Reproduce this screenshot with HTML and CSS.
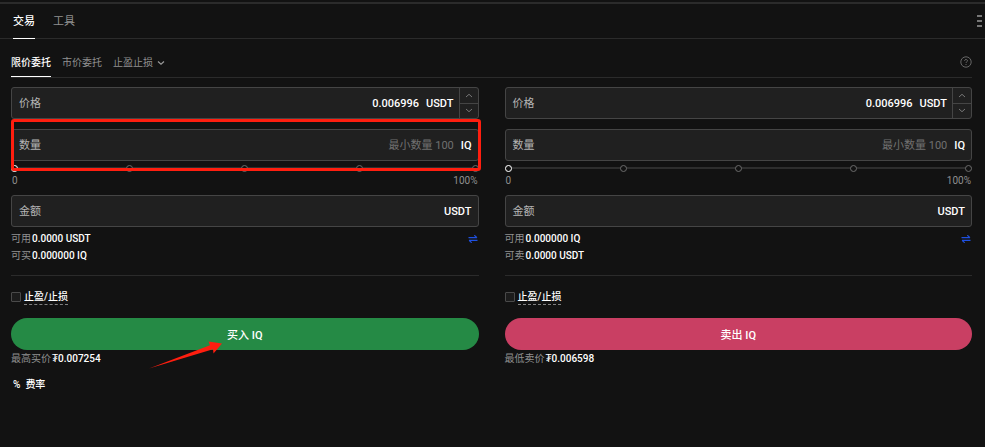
FILE: index.html
```html
<!DOCTYPE html>
<html lang="zh-CN">

<head>
    <meta charset="UTF-8">
    <meta name="viewport" content="width=device-width, initial-scale=1.0">
    <title>交易</title>
    <link rel="stylesheet" href="styles.css">
</head>

<body>
    <header class="top-bar">
        <nav class="main-tabs">
            <a href="#trade" class="main-tab active">交易</a>
            <a href="#tools" class="main-tab">工具</a>
        </nav>
        <button type="button" class="icon-btn menu-btn" aria-label="菜单">
            <svg width="6" height="14" viewBox="0 0 6 14" fill="#777">
                <rect x="0" y="1" width="5" height="2" />
                <rect x="0" y="6" width="5" height="2" />
                <rect x="0" y="11" width="5" height="2" />
            </svg>
        </button>
    </header>

    <main class="panel">
        <div class="order-bar">
            <nav class="order-tabs">
                <a href="#limit" class="order-tab active">限价委托</a>
                <a href="#market" class="order-tab">市价委托</a>
                <a href="#stop" class="order-tab">止盈止损
                    <svg width="8" height="6" viewBox="0 0 8 6" fill="none" stroke="#999" stroke-width="1.2">
                        <path d="M1 1.5L4 4.3L7 1.5" />
                    </svg>
                </a>
            </nav>
            <button type="button" class="icon-btn" aria-label="帮助">
                <svg width="12" height="12" viewBox="0 0 12 12" fill="none" stroke="#666">
                    <circle cx="6" cy="6" r="5.2" />
                    <path d="M4.5 4.9C4.5 3 7.5 3.1 7.5 4.8C7.5 5.8 6 5.8 6 7" />
                    <path d="M6 8V9" />
                </svg>
            </button>
        </div>

        <div class="forms">
            <form class="order-form buy">
                <div class="field">
                    <label for="buy-price">价格</label>
                    <input type="text" id="buy-price" value="0.006996">
                    <span class="unit">USDT</span>
                    <div class="stepper">
                        <button type="button" aria-label="增加">
                            <svg width="8" height="5" viewBox="0 0 8 5" fill="none" stroke="#777"><path d="M1 4L4 1.3L7 4" /></svg>
                        </button>
                        <button type="button" aria-label="减少">
                            <svg width="8" height="5" viewBox="0 0 8 5" fill="none" stroke="#777"><path d="M1 1L4 3.7L7 1" /></svg>
                        </button>
                    </div>
                </div>
                <div class="amount">
                    <div class="field">
                        <label for="buy-amount">数量</label>
                        <input type="text" id="buy-amount" placeholder="最小数量 100">
                        <span class="unit">IQ</span>
                    </div>
                    <div class="slider">
                        <div class="stops"><i></i><i></i><i></i><i></i><i></i></div>
                        <input type="range" min="0" max="100" value="0" aria-label="买入比例">
                    </div>
                    <div class="highlight"></div>
                </div>
                <div class="scale"><span>0</span><span>100%</span></div>
                <div class="field">
                    <label for="buy-total">金额</label>
                    <input type="text" id="buy-total">
                    <span class="unit">USDT</span>
                </div>
                <div class="balance">
                    <div>
                        <p>可用<b>0.0000 USDT</b></p>
                        <p>可买<b>0.000000 IQ</b></p>
                    </div>
                    <button type="button" class="icon-btn" aria-label="划转">
                        <svg width="10" height="8" viewBox="0 0 10 8" fill="none" stroke="#1f50e0" stroke-width="1.2">
                            <path d="M0.5 2.6H9M6.3 0.3L9 2.6M9.5 5.4H1M3.7 7.7L1 5.4" />
                        </svg>
                    </button>
                </div>
                <div class="tpsl">
                    <input type="checkbox" id="buy-tpsl">
                    <label for="buy-tpsl">止盈/止损</label>
                </div>
                <div class="submit-row">
                    <button type="button" class="submit">买入 IQ</button>
                    <svg class="arrow" width="74" height="30" viewBox="0 0 74 30" fill="#ff1e0f">
                        <path d="M0 27.5L61 4.2L59.5 0.5L73 2.5L64.5 12.5L64 8.2Z" />
                    </svg>
                </div>
                <p class="limit">最高买价<b>₮0.007254</b></p>
            </form>

            <form class="order-form sell">
                <div class="field">
                    <label for="sell-price">价格</label>
                    <input type="text" id="sell-price" value="0.006996">
                    <span class="unit">USDT</span>
                    <div class="stepper">
                        <button type="button" aria-label="增加">
                            <svg width="8" height="5" viewBox="0 0 8 5" fill="none" stroke="#777"><path d="M1 4L4 1.3L7 4" /></svg>
                        </button>
                        <button type="button" aria-label="减少">
                            <svg width="8" height="5" viewBox="0 0 8 5" fill="none" stroke="#777"><path d="M1 1L4 3.7L7 1" /></svg>
                        </button>
                    </div>
                </div>
                <div class="amount">
                    <div class="field">
                        <label for="sell-amount">数量</label>
                        <input type="text" id="sell-amount" placeholder="最小数量 100">
                        <span class="unit">IQ</span>
                    </div>
                    <div class="slider">
                        <div class="stops"><i></i><i></i><i></i><i></i><i></i></div>
                        <input type="range" min="0" max="100" value="0" aria-label="卖出比例">
                    </div>
                </div>
                <div class="scale"><span>0</span><span>100%</span></div>
                <div class="field">
                    <label for="sell-total">金额</label>
                    <input type="text" id="sell-total">
                    <span class="unit">USDT</span>
                </div>
                <div class="balance">
                    <div>
                        <p>可用<b>0.000000 IQ</b></p>
                        <p>可卖<b>0.0000 USDT</b></p>
                    </div>
                    <button type="button" class="icon-btn" aria-label="划转">
                        <svg width="10" height="8" viewBox="0 0 10 8" fill="none" stroke="#1f50e0" stroke-width="1.2">
                            <path d="M0.5 2.6H9M6.3 0.3L9 2.6M9.5 5.4H1M3.7 7.7L1 5.4" />
                        </svg>
                    </button>
                </div>
                <div class="tpsl">
                    <input type="checkbox" id="sell-tpsl">
                    <label for="sell-tpsl">止盈/止损</label>
                </div>
                <div class="submit-row">
                    <button type="button" class="submit">卖出 IQ</button>
                </div>
                <p class="limit">最低卖价<b>₮0.006598</b></p>
            </form>
        </div>

        <a href="#fees" class="fees"><span>%</span>费率</a>
    </main>
</body>

</html>
```

FILE: styles.css
```css
* {
    box-sizing: border-box;
}

body {
    margin: 0;
    min-height: 100vh;
    background: #121212;
    border-top: 2px solid #121212;
    color: #fff;
    font-family: Roboto, "Noto Sans CJK SC", sans-serif;
    font-size: 10px;
    line-height: 16px;
}

a {
    color: inherit;
    text-decoration: none;
}

p {
    margin: 0;
}

b {
    margin-left: 1px;
    color: #fff;
    font-weight: 500;
}

svg {
    display: block;
}

button,
input {
    font-family: inherit;
    color: inherit;
}

.icon-btn {
    padding: 0;
    border: none;
    background: none;
    cursor: pointer;
}

/* header */
.top-bar {
    display: flex;
    justify-content: space-between;
    align-items: center;
    height: 37px;
    padding: 0 2px 0 13px;
    border-top: 2px solid #2b2b2b;
    border-bottom: 1px solid #2b2b2b;
}

.main-tabs {
    display: flex;
    gap: 18px;
    height: 35px;
    font-size: 11px;
    line-height: 36px;
}

.main-tab {
    color: #909090;
}

.main-tab.active {
    color: #fff;
    font-weight: 500;
    border-bottom: 1px solid #fff;
}

/* order types */
.panel {
    padding: 0 13px 0 11px;
}

.order-bar {
    display: flex;
    justify-content: space-between;
    align-items: center;
    height: 39px;
    padding-top: 8px;
    border-bottom: 1px solid #2b2b2b;
}

.order-tabs {
    display: flex;
    gap: 11px;
    height: 30px;
    line-height: 30px;
}

.order-tab {
    display: flex;
    align-items: center;
    gap: 4px;
    padding-top: 2px;
    color: #909090;
}

.order-tab.active {
    color: #fff;
    font-weight: 500;
    border-bottom: 1px solid #fff;
}

/* forms */
.forms {
    display: grid;
    grid-template-columns: 1fr 1fr;
    gap: 26px;
    padding-top: 9px;
}

.field {
    display: flex;
    align-items: center;
    height: 32px;
    padding: 0 6px 0 7px;
    border: 1px solid #454545;
    border-radius: 3px;
    background: #202020;
    font-size: 11px;
}

.field label,
.unit {
    padding-top: 2px;
}

.field label {
    color: #b4b4b4;
}

.field input {
    flex: 1;
    min-width: 0;
    padding: 0;
    border: none;
    outline: none;
    background: none;
    font-size: 11px;
    font-weight: 500;
    text-align: right;
}

.field input::placeholder {
    color: #707070;
    font-weight: 400;
}

.unit {
    margin-left: 7px;
    font-weight: 500;
}

.stepper {
    display: flex;
    flex-direction: column;
    align-self: stretch;
    width: 19px;
    margin: 0 -6px 0 5px;
    border-left: 1px solid #454545;
}

.stepper button {
    display: flex;
    flex: 1;
    align-items: center;
    justify-content: center;
    padding: 0;
    border: none;
    background: none;
}

.stepper button + button {
    border-top: 1px solid #454545;
}

.amount {
    position: relative;
    margin-top: 10px;
}

.slider {
    position: relative;
    height: 14px;
}

.slider input {
    position: absolute;
    inset: 0;
    width: 100%;
    height: 14px;
    margin: 0;
    appearance: none;
    background: none;
}

.slider input::-webkit-slider-thumb {
    appearance: none;
    width: 7px;
    height: 7px;
    border: 1px solid #fff;
    border-radius: 50%;
    background: #121212;
}

.stops {
    display: flex;
    justify-content: space-between;
    align-items: center;
    height: 14px;
    background: linear-gradient(#2e2e2e, #2e2e2e) center / 100% 2px no-repeat;
}

.stops i {
    width: 7px;
    height: 7px;
    border: 1px solid #6c6c6c;
    border-radius: 50%;
    background: #121212;
}

.highlight {
    position: absolute;
    inset: -10px -2px 4px 0;
    border: 3px solid #ff1e0f;
    border-radius: 3px;
    pointer-events: none;
}

.scale {
    display: flex;
    justify-content: space-between;
    height: 20px;
    padding: 0 1px;
    line-height: 12px;
    color: #909090;
}

.balance {
    display: flex;
    justify-content: space-between;
    align-items: flex-start;
    height: 49px;
    padding-top: 3px;
    border-bottom: 1px solid #2b2b2b;
    line-height: 17px;
    color: #909090;
}

.balance .icon-btn {
    padding: 5px 1px 0 0;
}

.tpsl {
    display: flex;
    align-items: center;
    gap: 3px;
    height: 42px;
}

.tpsl input {
    appearance: none;
    width: 10px;
    height: 10px;
    margin: 0;
    border: 1px solid #4a4a4a;
    border-radius: 1px;
    background: #1c1c1c;
}

.tpsl input:checked {
    background: #fff;
}

.tpsl label {
    border-bottom: 1px dashed #808080;
    font-weight: 500;
    line-height: 14px;
}

.submit-row {
    position: relative;
}

.submit {
    display: block;
    width: 100%;
    height: 32px;
    border: none;
    border-radius: 16px;
    font-size: 11px;
    font-weight: 500;
    cursor: pointer;
}

.buy .submit {
    background: #258a45;
}

.sell .submit {
    background: #c93f63;
}

.arrow {
    position: absolute;
    top: 23px;
    left: 138px;
}

.limit {
    padding-top: 1px;
    color: #909090;
}

.fees {
    display: inline-flex;
    gap: 5px;
    margin-top: 10px;
    padding-left: 2px;
    font-weight: 500;
}
```
